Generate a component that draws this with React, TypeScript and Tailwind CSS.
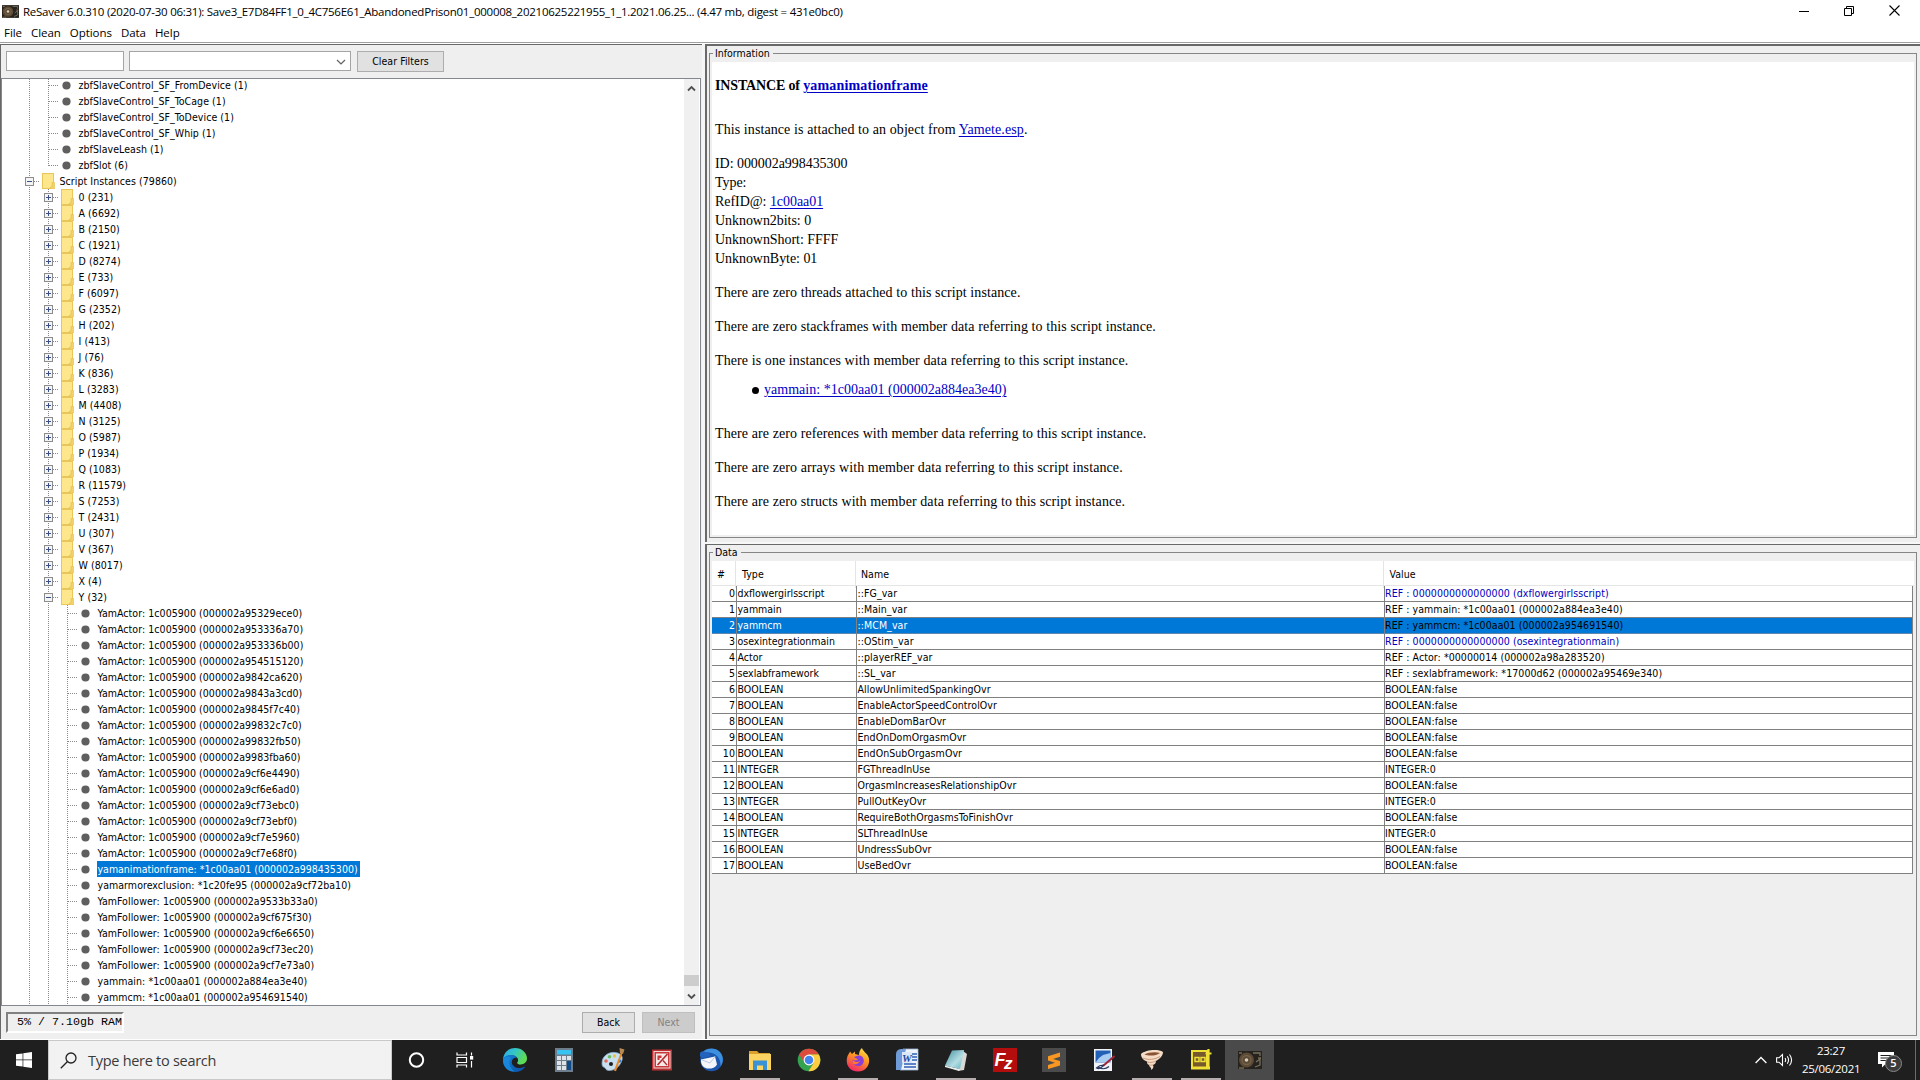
import type { ReactNode } from "react";
import clsx from "clsx";

type GuideKind = "line" | "branch" | "end" | "plus" | "minus";

type TreeNode = {
  label: string;
  guides: GuideKind[];
  icon: "folder" | "dot";
  selected?: boolean;
};

type Row = {
  type: string;
  name: string;
  value: string;
  empty?: boolean;
};

const elements = [
  "zbfSlaveControl_SF_FromDevice (1)",
  "zbfSlaveControl_SF_ToCage (1)",
  "zbfSlaveControl_SF_ToDevice (1)",
  "zbfSlaveControl_SF_Whip (1)",
  "zbfSlaveLeash (1)",
  "zbfSlot (6)",
];

const groups = [
  "0 (231)",
  "A (6692)",
  "B (2150)",
  "C (1921)",
  "D (8274)",
  "E (733)",
  "F (6097)",
  "G (2352)",
  "H (202)",
  "I (413)",
  "J (76)",
  "K (836)",
  "L (3283)",
  "M (4408)",
  "N (3125)",
  "O (5987)",
  "P (1934)",
  "Q (1083)",
  "R (11579)",
  "S (7253)",
  "T (2431)",
  "U (307)",
  "V (367)",
  "W (8017)",
  "X (4)",
  "Y (32)",
];

const instances = [
  "YamActor: 1c005900 (000002a95329ece0)",
  "YamActor: 1c005900 (000002a953336a70)",
  "YamActor: 1c005900 (000002a953336b00)",
  "YamActor: 1c005900 (000002a954515120)",
  "YamActor: 1c005900 (000002a9842ca620)",
  "YamActor: 1c005900 (000002a9843a3cd0)",
  "YamActor: 1c005900 (000002a9845f7c40)",
  "YamActor: 1c005900 (000002a99832c7c0)",
  "YamActor: 1c005900 (000002a99832fb50)",
  "YamActor: 1c005900 (000002a9983fba60)",
  "YamActor: 1c005900 (000002a9cf6e4490)",
  "YamActor: 1c005900 (000002a9cf6e6ad0)",
  "YamActor: 1c005900 (000002a9cf73ebc0)",
  "YamActor: 1c005900 (000002a9cf73ebf0)",
  "YamActor: 1c005900 (000002a9cf7e5960)",
  "YamActor: 1c005900 (000002a9cf7e68f0)",
  "yamanimationframe: *1c00aa01 (000002a998435300)",
  "yamarmorexclusion: *1c20fe95 (000002a9cf72ba10)",
  "YamFollower: 1c005900 (000002a9533b33a0)",
  "YamFollower: 1c005900 (000002a9cf675f30)",
  "YamFollower: 1c005900 (000002a9cf6e6650)",
  "YamFollower: 1c005900 (000002a9cf73ec20)",
  "YamFollower: 1c005900 (000002a9cf7e73a0)",
  "yammain: *1c00aa01 (000002a884ea3e40)",
  "yammcm: *1c00aa01 (000002a954691540)",
];

const nodes: TreeNode[] = [
  ...elements.map((label, i): TreeNode => ({
    label,
    guides: ["line", i === elements.length - 1 ? "end" : "branch"],
    icon: "dot",
  })),
  { label: "Script Instances (79860)", guides: ["minus"], icon: "folder" },
  ...groups.map((label): TreeNode => ({
    label,
    guides: ["line", label.startsWith("Y") ? "minus" : "plus"],
    icon: "folder",
  })),
  ...instances.map((label): TreeNode => ({
    label,
    guides: ["line", "line", "branch"],
    icon: "dot",
    selected: label.startsWith("yamanimationframe"),
  })),
];

const rows: Row[] = [
  { type: "dxflowergirlsscript", name: "::FG_var", value: "REF : 0000000000000000 (dxflowergirlsscript)", empty: true },
  { type: "yammain", name: "::Main_var", value: "REF : yammain: *1c00aa01 (000002a884ea3e40)" },
  { type: "yammcm", name: "::MCM_var", value: "REF : yammcm: *1c00aa01 (000002a954691540)" },
  { type: "osexintegrationmain", name: "::OStim_var", value: "REF : 0000000000000000 (osexintegrationmain)", empty: true },
  { type: "Actor", name: "::playerREF_var", value: "REF : Actor: *00000014 (000002a98a283520)" },
  { type: "sexlabframework", name: "::SL_var", value: "REF : sexlabframework: *17000d62 (000002a95469e340)" },
  { type: "BOOLEAN", name: "AllowUnlimitedSpankingOvr", value: "BOOLEAN:false" },
  { type: "BOOLEAN", name: "EnableActorSpeedControlOvr", value: "BOOLEAN:false" },
  { type: "BOOLEAN", name: "EnableDomBarOvr", value: "BOOLEAN:false" },
  { type: "BOOLEAN", name: "EndOnDomOrgasmOvr", value: "BOOLEAN:false" },
  { type: "BOOLEAN", name: "EndOnSubOrgasmOvr", value: "BOOLEAN:false" },
  { type: "INTEGER", name: "FGThreadInUse", value: "INTEGER:0" },
  { type: "BOOLEAN", name: "OrgasmIncreasesRelationshipOvr", value: "BOOLEAN:false" },
  { type: "INTEGER", name: "PullOutKeyOvr", value: "INTEGER:0" },
  { type: "BOOLEAN", name: "RequireBothOrgasmsToFinishOvr", value: "BOOLEAN:false" },
  { type: "INTEGER", name: "SLThreadInUse", value: "INTEGER:0" },
  { type: "BOOLEAN", name: "UndressSubOvr", value: "BOOLEAN:false" },
  { type: "BOOLEAN", name: "UseBedOvr", value: "BOOLEAN:false" },
];

const SELECTED_ROW = 2;

/* ---------- tree ---------- */

function Guide({ kind }: { kind: GuideKind }) {
  const toggle = kind === "plus" || kind === "minus";
  return (
    <svg width="19" height="16" className="shrink-0" shapeRendering="crispEdges" fill="none">
      <path d={kind === "end" ? "M9.5 0V9" : "M9.5 0V16"} stroke="#8a8a8a" strokeDasharray="1 1" />
      {kind !== "line" && <path d="M10 8.5H19" stroke="#8a8a8a" strokeDasharray="1 1" />}
      {toggle && (
        <>
          <rect x="5.5" y="4.5" width="8" height="8" fill="#f4f4f4" stroke="#8c8c8c" />
          <path d={kind === "plus" ? "M7 8.5H12M9.5 6V11" : "M7 8.5H12"} stroke="#3b4f8c" />
        </>
      )}
    </svg>
  );
}

function NodeIcon({ icon }: { icon: TreeNode["icon"] }) {
  if (icon === "dot") {
    return (
      <svg width="19" height="16" className="shrink-0">
        <circle cx="8.5" cy="8.5" r="4.1" fill="#5f5f5f" />
      </svg>
    );
  }
  return (
    <svg width="19" height="16" className="shrink-0">
      <rect x="3" y="0" width="12" height="16" fill="#e8c65a" />
      <rect x="4" y="1" width="10" height="14" fill="#fde68c" />
      <path d="M13 9.5h2.5V16H11.5V14H13z" fill="#f3d267" stroke="#e2bd4c" strokeWidth=".6" />
    </svg>
  );
}

function Tree() {
  return (
    <div className="-mt-0.5 flex-1 tracking-[0.06px]">
      {nodes.map((node) => (
        <div key={node.label} className="flex h-4 items-center pl-[18px]">
          {node.guides.map((kind, i) => (
            <Guide key={i} kind={kind} />
          ))}
          <NodeIcon icon={node.icon} />
          <span
            className={clsx(
              "ml-px h-4 pl-[0.5px] leading-4 whitespace-nowrap",
              node.selected && "bg-[#0078d7] pr-0.5 tracking-normal text-white",
            )}
          >
            {node.label}
          </span>
        </div>
      ))}
    </div>
  );
}

function Chevron({ up }: { up?: boolean }) {
  return (
    <svg width="9" height="7" viewBox="0 0 9 7" fill="none" stroke="#505050" strokeWidth="1.8">
      <path d={up ? "M1 5.5 4.5 2 8 5.5" : "M1 1.5 4.5 5 8 1.5"} />
    </svg>
  );
}

function LeftPane() {
  return (
    <div className="flex w-[702px] shrink-0 flex-col border-t border-l border-[#696969]">
      <div className="flex h-[33px] shrink-0 items-start gap-[5px] pt-1.5 pl-[5px]">
        <div className="h-5 w-[118px] border border-[#a5a5a5] bg-white" />
        <div className="flex h-5 w-[222px] items-center justify-end border border-[#a5a5a5] bg-white pr-1">
          <svg width="10" height="7" viewBox="0 0 10 7" fill="none" stroke="#606060" strokeWidth="1.2">
            <path d="M1 2 5 6 9 2" />
          </svg>
        </div>
        <button className="ml-px h-[21px] w-[87px] border border-[#adadad] bg-[#e1e1e1] tracking-[0.06px]">
          Clear Filters
        </button>
      </div>
      <div className="flex h-[928px] w-[700px] shrink-0 overflow-hidden border border-[#828790] bg-white pr-px">
        <Tree />
        <div className="flex w-[15px] flex-col items-center bg-[#f0f0f0] pt-1.5 pb-[5px]">
          <Chevron up />
          <div className="mt-auto mb-[7px] h-[11px] w-[15px] bg-[#cdcdcd]" />
          <Chevron />
        </div>
      </div>
      <div className="flex h-[33px] shrink-0 items-center justify-between pr-[7px] pl-[5px]">
        <div className="h-[21px] w-[118px] border-2 border-t-[#808080] border-r-white border-b-white border-l-[#808080] pl-[9px] font-['Liberation_Mono',monospace] text-[11.67px] leading-[17px] whitespace-nowrap">
          5% / 7.10gb RAM
        </div>
        <div className="flex gap-[7px]">
          <button className="h-[21px] w-[53px] border border-[#adadad] bg-[#e1e1e1]">Back</button>
          <button className="h-[21px] w-[53px] border border-[#bfbfbf] bg-[#cccccc] text-[#838383]">Next</button>
        </div>
      </div>
    </div>
  );
}

/* ---------- right side ---------- */

function TitledBox({ title, className, children }: { title: string; className?: string; children: ReactNode }) {
  return (
    <div className={clsx("relative ml-0.5 w-[1208px] border border-[#868686] px-0.5 pt-2", className)}>
      <span className="absolute -top-2 left-[3px] bg-[#efefef] pr-[3px] pl-0.5 leading-[15px]">{title}</span>
      {children}
    </div>
  );
}

function Link({ children }: { children: ReactNode }) {
  return <a className="text-[#0000c8] underline decoration-1 underline-offset-2">{children}</a>;
}

function Information() {
  return (
    <TitledBox title="Information" className="mt-[7px] h-[485px] pb-0.5">
      <div className="h-full bg-white pt-[14px] pl-[3px] font-['Liberation_Serif',serif] text-[14px] leading-[19px] tracking-[0.09px]">
        <h3 className="font-bold tracking-[-0.15px]">
          INSTANCE of{" "}
          <span className="tracking-[0.15px]">
            <Link>yamanimationframe</Link>
          </span>
        </h3>
        <p className="mt-[25px]">
          This instance is attached to an object from <Link>Yamete.esp</Link>.
        </p>
        <div className="mt-[15px] mb-[15px] tracking-[-0.05px]">
          <p>ID: 000002a998435300</p>
          <p>Type:</p>
          <p>
            RefID@: <Link>1c00aa01</Link>
          </p>
          <p>Unknown2bits: 0</p>
          <p>UnknownShort: FFFF</p>
          <p>UnknownByte: 01</p>
        </div>
        <p className="mb-[15px]">There are zero threads attached to this script instance.</p>
        <p className="mb-[15px]">There are zero stackframes with member data referring to this script instance.</p>
        <p>There is one instances with member data referring to this script instance.</p>
        <div className="mt-2.5 mb-[25px] flex items-center gap-[5px] pl-[37px] tracking-[0.02px]">
          <span className="mt-0.5 size-[7px] rounded-full bg-black" />
          <Link>yammain: *1c00aa01 (000002a884ea3e40)</Link>
        </div>
        <p className="mb-[15px]">There are zero references with member data referring to this script instance.</p>
        <p className="mb-[15px]">There are zero arrays with member data referring to this script instance.</p>
        <p>There are zero structs with member data referring to this script instance.</p>
      </div>
    </TitledBox>
  );
}

function DataTable() {
  return (
    <TitledBox title="Data" className="mt-[7px] h-[484px]">
      <div className="grid h-[25px] grid-cols-[24px_120px_528px_1fr] border-b border-[#e5e5e5] bg-white leading-[27px] tracking-[0.06px]">
        <span className="border-r border-[#e5e5e5] pl-[5px]">#</span>
        <span className="border-r border-[#e5e5e5] pl-[6px]">Type</span>
        <span className="border-r border-[#e5e5e5] pl-[5px]">Name</span>
        <span className="pl-[5.5px]">Value</span>
      </div>
      <div className="mr-px border-r border-[#808080]">
        {rows.map((row, i) => (
          <div
            key={row.name}
            className={clsx(
              "grid h-4 grid-cols-[25px_120px_528px_1fr] border-b leading-[15px] tracking-[0.07px]",
              i === SELECTED_ROW ? "border-[#5f86ad] bg-[#0078d7] text-white" : "border-[#808080] bg-white",
            )}
          >
            <span className="border-r border-[#808080] pr-px text-right">{i}</span>
            <span className="border-r border-[#808080] pl-[0.5px] tracking-normal">{row.type}</span>
            <span className="border-r border-[#808080] pl-[0.5px]">{row.name}</span>
            <span className={row.empty ? "text-[#0000c0]" : "text-black"}>{row.value}</span>
          </div>
        ))}
      </div>
    </TitledBox>
  );
}

/* ---------- taskbar ---------- */

function CortanaIcon() {
  return (
    <svg width="24" height="24" fill="none">
      <circle cx="11.5" cy="12" r="6.7" stroke="#fff" strokeWidth="2" />
    </svg>
  );
}

function TaskViewIcon() {
  return (
    <svg width="24" height="24" fill="none" stroke="#fff" strokeWidth="1.2">
      <path d="M3 4.5v2.500h9.500V4.500M3 19.500V17h9.500v2.500M3 9.500h9.500v5H3zM17.500 4.500v3M17.500 13v6.500" />
      <rect x="16.600" y="8.600" width="2" height="2.400" fill="#fff" />
    </svg>
  );
}

function EdgeIcon() {
  return (
    <svg width="24" height="24" viewBox="0 0 24 24">
      <defs>
        <linearGradient id="edge-a" x1="0" y1="0" x2="1" y2=".4">
          <stop offset="0" stopColor="#2fa8e8" />
          <stop offset=".5" stopColor="#34c6c6" />
          <stop offset="1" stopColor="#5fdc55" />
        </linearGradient>
        <linearGradient id="edge-b" x1="0" y1="0" x2="1" y2="1">
          <stop offset="0" stopColor="#1583d8" />
          <stop offset="1" stopColor="#0b4fa3" />
        </linearGradient>
      </defs>
      <path d="M0 11.5C.6 4.7 5.600 0 12 0c7 0 12 5 12 10.300 0 4-3 6.200-6.200 6.200-3 0-4-1-3.500-2 1.200-1.400 1-3.600-.3-5C11 6.200 3.500 6 0 11.500z" fill="url(#edge-a)" />
      <path d="M0 12.500C0 8.700 4 7 7.500 7c3 0 5.700 1.200 6.500 3-3-.8-5.500 1.500-5.200 4.500.4 4 5.200 6.500 9.700 5.300 1.500-.4 3-1.400 3.600-1.300.5.300-2.800 5.500-9.600 5.500C5.500 24 0 19 0 12.500z" fill="url(#edge-b)" />
      <path d="M8 9.500c-3 4-2 10 3.500 14C5 24 0 18.500 0 12.500 0 9.500 4.500 8 8 9.500z" fill="#1b8fe0" opacity=".75" />
    </svg>
  );
}

function CalculatorIcon() {
  const keys = [9, 14, 19];
  return (
    <svg width="24" height="24">
      <rect x="3" width="18" height="24" fill="#6d7d8b" />
      <rect x="5" y="2" width="14" height="4.500" fill="#35c3f3" />
      {keys.map((y) => (
        <g key={y} fill="#dde3e8">
          <rect x="5" y={y - 1} width="4" height="4" />
          <rect x="10" y={y - 1} width="4" height="4" />
          {y === 9 && <rect x="15" y={y - 1} width="4" height="4" />}
        </g>
      ))}
      <rect x="15" y="13" width="4" height="9" fill="#0d4a86" />
    </svg>
  );
}

function PaintIcon() {
  return (
    <svg width="24" height="24">
      <path d="M1 15C1 8 8 3.500 14.500 4.500c6 .8 8 4.500 6 9-2 5-7 9.500-13 9-3-.2-3-3-5-3.500C1.300 18.600 1 17 1 15z" fill="#c9dfef" stroke="#7fa6c4" strokeWidth=".8" />
      <circle cx="5" cy="13" r="1.800" fill="#e0695c" />
      <circle cx="8.500" cy="8.800" r="1.800" fill="#6bbb60" />
      <circle cx="13.500" cy="8" r="1.700" fill="#e9c33d" />
      <circle cx="10" cy="16" r="2" fill="#1f1f1f" />
      <circle cx="18.500" cy="13" r="1.800" fill="#3c7fc8" />
      <path d="M20 4 13 22.500l2 .8L21.500 5z" fill="#e88a2a" />
      <path d="M18.500 0 23.500 1.500 22 6l-3-1z" fill="#b98a52" />
    </svg>
  );
}

function RedToolIcon() {
  return (
    <svg width="24" height="24" fill="none">
      <rect x="2" y="1.500" width="20" height="21" fill="#b93034" />
      <rect x="4" y="3.500" width="16" height="16.500" fill="#c8383a" stroke="#f0d5d2" />
      <rect x="6" y="5.500" width="12" height="12.500" fill="#f5e9e7" />
      <path d="M17.500 6 7.500 17" stroke="#b3272b" strokeWidth="1.600" />
      <path d="M13 12.500l4 4.500" stroke="#b3272b" strokeWidth="1.300" />
      <path d="M7.500 7.500h4v2.500h-2v2h-2z" fill="#c8383a" />
    </svg>
  );
}

function ThunderbirdIcon() {
  return (
    <svg width="24" height="24">
      <circle cx="12.500" cy="12" r="11.300" fill="#1c57ad" />
      <path d="M3 5C7-.5 16-1 21 4c3.500 4 4 10 .5 14.500C22 11 18 5 10 4.500 7 4 5 4 3 5z" fill="#3d8fe0" />
      <path d="M2 11.500 16 8.500l2 8c-2 3.500-6 4.500-10 4C4.500 19.500 1.500 17 2 11.500z" fill="#f4f6fa" />
      <path d="m2 11.500 9 3.500 5-6.500" fill="none" stroke="#b9c8de" />
      <path d="M1 5.500C1.500 3 4.500 2.500 6.500 4c3 .5 4.500 2 5 4L4 10c-2.500 0-3.500-2-3-4.500z" fill="#2264bd" />
    </svg>
  );
}

function ExplorerIcon() {
  return (
    <svg width="24" height="24">
      <path d="M1 3h8l2 2h11v4H1z" fill="#dca02c" />
      <path d="M1 6h22v16H1z" fill="#fcd462" />
      <path d="M5 22V12.500h14V22h-4v-4.500H9V22z" fill="#3a91d4" />
    </svg>
  );
}

function ChromeIcon() {
  return (
    <svg width="24" height="24">
      <circle cx="12" cy="12" r="11.300" fill="#34a350" />
      <path d="M2.200 6.400A11.300 11.300 0 0 1 21.800 6.400H12L7.200 14.800z" fill="#dd4b3e" />
      <path d="M21.800 6.400A11.300 11.300 0 0 1 11.500 23.300L16.800 14.800 12 6.400z" fill="#fccd3f" />
      <circle cx="12" cy="12" r="5.400" fill="#fff" />
      <circle cx="12" cy="12" r="4.300" fill="#4284f0" />
    </svg>
  );
}

function FirefoxIcon() {
  return (
    <svg width="24" height="24">
      <defs>
        <linearGradient id="ff" x1=".8" y1="0" x2=".3" y2="1">
          <stop offset="0" stopColor="#ffe14a" />
          <stop offset=".45" stopColor="#ff9320" />
          <stop offset="1" stopColor="#f0246b" />
        </linearGradient>
      </defs>
      <path d="M4 3.500 6 6l3-2.500V6l4 1c0-3 1-5.500 3-7 .5 3 5 5 6.500 9C25 16 20 23.500 12 23.500S-.5 17 1 10c.5-3 2-4 3-6.500z" fill="url(#ff)" />
      <path d="M8 9c2-.8 3-1.500 6-1.500 3 1 4.500 4 3.500 7-1 3-4.500 4.300-7.500 3.300-3-1.300-4-4-3-6.300 1.500 1 4 1.500 5-.5C11 11 9.500 10.500 8 9z" fill="#8b3fd6" />
      <path d="M7 12c2 2.500 5 2.500 7 1-1 3-5 4-7 2.500z" fill="#ff7a2c" />
    </svg>
  );
}

function WordIcon() {
  return (
    <svg width="24" height="24">
      <path d="M8 1h15v21H5z" fill="#eef3fb" stroke="#9fb6d8" strokeWidth=".8" />
      <path d="M17 6h5M17 9h5M17 12h5M9 16h12M9 19h12" stroke="#2d5fb4" strokeWidth="1.400" />
      <path d="M1 6c0-3 2-4.500 5-5h5L6 22H1z" fill="#6f9bd8" />
      <rect x="7" y="4" width="10" height="11" fill="#dce8f8" />
      <text x="7" y="13.500" fontSize="11" fontWeight="bold" fontStyle="italic" fill="#1d4ba0" fontFamily="Liberation Serif">
        W
      </text>
    </svg>
  );
}

function NotepadIcon() {
  return (
    <svg width="24" height="24">
      <defs>
        <linearGradient id="note" x1="0" y1="0" x2="1" y2="1">
          <stop offset="0" stopColor="#3f8f9f" />
          <stop offset=".6" stopColor="#b4dde3" />
          <stop offset="1" stopColor="#5fb0be" />
        </linearGradient>
      </defs>
      <path d="M19 3 23 6l-3 16-6 1z" fill="#d8d8d4" />
      <path d="M8 2.500 20 2l-4 19L1 17.500z" fill="url(#note)" />
      <path d="M1 17.500 16 21l-1 2-14-4z" fill="#e8eeee" />
    </svg>
  );
}

function FileZillaIcon() {
  return (
    <svg width="24" height="24">
      <rect width="24" height="24" fill="#b30d0d" />
      <text x="1.500" y="17.500" fontSize="18" fontWeight="bold" fontStyle="italic" fill="#fff" fontFamily="Liberation Sans">
        F
      </text>
      <text x="11" y="20.500" fontSize="17" fontWeight="bold" fontStyle="italic" fill="#fff" fontFamily="Liberation Sans">
        z
      </text>
    </svg>
  );
}

function SublimeIcon() {
  return (
    <svg width="24" height="24">
      <rect width="24" height="24" fill="#4b4b4b" />
      <path d="M18 4.500v4.200L11 11l7 2v4.500L6 21v-4l7-2.300L6 12.500V8.200z" fill="#f89822" />
    </svg>
  );
}

function ImageEditorIcon() {
  return (
    <svg width="24" height="24" fill="none">
      <rect x="3" y="1" width="18" height="22" fill="#f2f4f8" />
      <rect x="4.500" y="2.500" width="15" height="12" fill="#2361b8" />
      <path d="M4.500 14.500 8 10l4-3 7.500-2v9.500z" fill="#a9cdf2" />
      <path d="M23.500 8 12 18" stroke="#a32636" strokeWidth="2" />
      <path d="M12.500 17c-2 3-5 4-7 3 2-2 4-3 7-3zM7 19c4 2.500 8 2 11-.5" stroke="#27345c" strokeWidth="1.200" />
    </svg>
  );
}

function TornadoIcon() {
  return (
    <svg width="24" height="24" fill="none">
      <path d="M1 6C5 2 18 .5 23 4c0 4-4 7.500-7 9 0 2-1 3-3 4 1 2 0 4-2 5 1-3-2-3-2-5-2-1-2-2-2-3.500C4 12.500 1 10 1 6z" fill="#f5dcc6" />
      <path d="M4.500 6.500C8 4.500 15 3.500 20 5c-3 2.700-11 3.500-15.500 1.500z" fill="#8a5334" />
      <path d="M3 10c5 2.500 12 1.500 17-1.500M7 14c4 1 7 0 9-1M9 17c2 .5 3 0 4 0" stroke="#c9997a" />
    </svg>
  );
}

function ModManagerIcon() {
  return (
    <svg width="24" height="24" fill="none">
      <path d="M3 3h15v17H3z" fill="#75582c" stroke="#f0df37" strokeWidth="2" />
      <path d="M2 18.500h19v3H2z" fill="#f0df37" />
      <path d="M6 9.500h4v4H6zM12 9.500h4v4h-4z" stroke="#f0df37" strokeWidth="1.500" />
      <path d="M19.500 1v19M16.500 5.500h6" stroke="#f0df37" strokeWidth="2.200" />
    </svg>
  );
}

function ReSaverIcon({ size = 24 }: { size?: number }) {
  return (
    <svg width={size} height={size} viewBox="0 0 24 24" fill="none">
      <rect y="3" width="24" height="18" fill="#26221d" />
      <circle cx="8.500" cy="12" r="7.500" fill="#5b4a35" />
      <circle cx="8.500" cy="12" r="4.500" stroke="#75624a" strokeWidth="1.300" />
      <circle cx="8.500" cy="12" r="1.800" fill="#d8cdb6" />
      <path d="M15 5h7v3M17 19l5-2v-6l-4 3" stroke="#77705f" strokeWidth="1.300" />
      <path d="M1 5h3M1 20h5M20 10h3" stroke="#a08b66" />
    </svg>
  );
}

const tasks: { id: string; icon: ReactNode; open?: boolean; active?: boolean }[] = [
  { id: "cortana", icon: <CortanaIcon /> },
  { id: "taskview", icon: <TaskViewIcon /> },
  { id: "edge", icon: <EdgeIcon /> },
  { id: "calculator", icon: <CalculatorIcon /> },
  { id: "paint", icon: <PaintIcon /> },
  { id: "redtool", icon: <RedToolIcon /> },
  { id: "thunderbird", icon: <ThunderbirdIcon /> },
  { id: "explorer", icon: <ExplorerIcon />, open: true },
  { id: "chrome", icon: <ChromeIcon /> },
  { id: "firefox", icon: <FirefoxIcon />, open: true },
  { id: "word", icon: <WordIcon /> },
  { id: "notepad", icon: <NotepadIcon />, open: true },
  { id: "filezilla", icon: <FileZillaIcon /> },
  { id: "sublime", icon: <SublimeIcon /> },
  { id: "imageeditor", icon: <ImageEditorIcon /> },
  { id: "tornado", icon: <TornadoIcon />, open: true },
  { id: "modmanager", icon: <ModManagerIcon />, open: true },
  { id: "resaver", icon: <ReSaverIcon />, active: true },
];

function Taskbar() {
  return (
    <div className="flex h-10 shrink-0 bg-[#1f1f1f] font-['Open_Sans',sans-serif] text-white">
      <div className="flex w-12 items-center justify-center">
        <svg width="16" height="16" viewBox="0 0 16 16" fill="#fff">
          <path d="M0 2.300 6.600 1.400V7.600H0zM7.300 1.300 16 0V7.600H7.300zM0 8.300H6.600V14.600L0 13.700zM7.300 8.300H16V16L7.300 14.700z" />
        </svg>
      </div>
      <div className="flex w-[344px] items-center border border-[#c9c9c9] bg-[#f2f2f2] pl-[11px] text-[#3a3a3a]">
        <svg width="17" height="17" viewBox="0 0 17 17" fill="none" stroke="#222" strokeWidth="1.300">
          <circle cx="11" cy="6" r="5" />
          <path d="M7.500 9.500.8 16.200" />
        </svg>
        <span className="mt-px ml-[11px] text-[14.5px] tracking-[-0.28px]">Type here to search</span>
      </div>
      {tasks.map((task) => (
        <div key={task.id} className={clsx("flex w-[49px] flex-col items-center", task.active && "bg-[#4a4a4a]")}>
          <div className="flex h-[38px] items-center pt-0.5">{task.icon}</div>
          {task.open && <div className="h-0.5 w-10 bg-[#b5adae]" />}
        </div>
      ))}
      <div className="ml-auto flex items-center">
        <svg width="12" height="8" viewBox="0 0 12 8" fill="none" stroke="#fff" strokeWidth="1.300">
          <path d="M.6 7 6 1.500 11.400 7" />
        </svg>
        <svg width="17" height="14" viewBox="0 0 17 14" fill="none" stroke="#fff" strokeWidth="1.100" className="ml-[9px]">
          <path d="M.6 4.800H3L6.500 1.500v11L3 9.200H.6zM9 5c.8 1.200.8 2.800 0 4M11.200 3.300c1.600 2.200 1.600 5.200 0 7.400M13.500 1.500c2.500 3.300 2.500 7.700 0 11" />
        </svg>
        <div className="ml-[9px] w-[58px] text-center text-[11.5px] leading-[18px] tracking-[-0.28px] whitespace-nowrap">
          <div>23:27</div>
          <div>25/06/2021</div>
        </div>
        <div className="relative mr-[13px] ml-[18px] h-6 w-6">
          <svg width="16" height="16" viewBox="0 0 16 16" className="mt-1">
            <path d="M0 0h16v12H7.500L4 15.500V12H0z" fill="#fff" />
            <path d="M2.500 3.500h11M2.500 6h11M2.500 8.500h7" stroke="#1f1f1f" />
          </svg>
          <span className="absolute top-[7px] left-[7px] flex size-[17px] items-center justify-center rounded-full border border-[#8a8a8a] bg-[#3b3b3b] text-[11px] font-semibold">
            5
          </span>
        </div>
        <div className="mr-1 h-10 w-px bg-[#6b6b6b]" />
      </div>
    </div>
  );
}

function TitleBar() {
  return (
    <div className="flex h-[23px] shrink-0 items-center pl-0.5 font-['Open_Sans',sans-serif] text-[11.5px]">
      <ReSaverIcon size={17} />
      <span className="ml-1 tracking-[-0.26px] whitespace-nowrap">
        ReSaver 6.0.310 (2020-07-30 06:31): Save3_E7D84FF1_0_4C756E61_AbandonedPrison01_000008_20210625221955_1_1.2021.06.25...
        (4.47 mb, digest = 431e0bc0)
      </span>
      <div className="-mt-0.5 mr-5 ml-auto flex items-center gap-[35px]">
        <svg width="10" height="10" shapeRendering="crispEdges">
          <path d="M0 5.500h10" stroke="#000" />
        </svg>
        <svg width="10" height="10" fill="none" stroke="#000">
          <path d="M.5 2.500h7v7h-7zM2.500 2.500v-2h7v7h-2" />
        </svg>
        <svg width="11" height="11" fill="none" stroke="#000" strokeWidth="1.100">
          <path d="m.5.500 10 10M10.500.500l-10 10" />
        </svg>
      </div>
    </div>
  );
}

export default function App() {
  return (
    <div className="flex h-[1080px] w-[1920px] flex-col overflow-hidden bg-white font-['DejaVu_Sans_Condensed','DejaVu_Sans',sans-serif] text-[10.5px] text-black">
      <TitleBar />
      <div className="flex h-[19px] shrink-0 items-center gap-[9px] pl-1 font-['Open_Sans',sans-serif] text-[11.5px] tracking-[-0.05px]">
        {["File", "Clean", "Options", "Data", "Help"].map((item) => (
          <span key={item}>{item}</span>
        ))}
      </div>
      <div className="h-0.5 shrink-0 border-t border-[#a0a0a0]" />
      <div className="flex h-[995px] shrink-0 bg-[#efefef]">
        <LeftPane />
        <div className="w-[3px] bg-[#f5f5f5]" />
        <div className="flex flex-1 flex-col">
          <div className="h-[498px] border-t-2 border-l-2 border-[#696969]">
            <Information />
          </div>
          <div className="h-0.5 bg-[#f7f7f7]" />
          <div className="h-[495px] border-t border-l-2 border-[#696969]">
            <DataTable />
          </div>
        </div>
      </div>
      <div className="h-px shrink-0 bg-white" />
      <Taskbar />
    </div>
  );
}
